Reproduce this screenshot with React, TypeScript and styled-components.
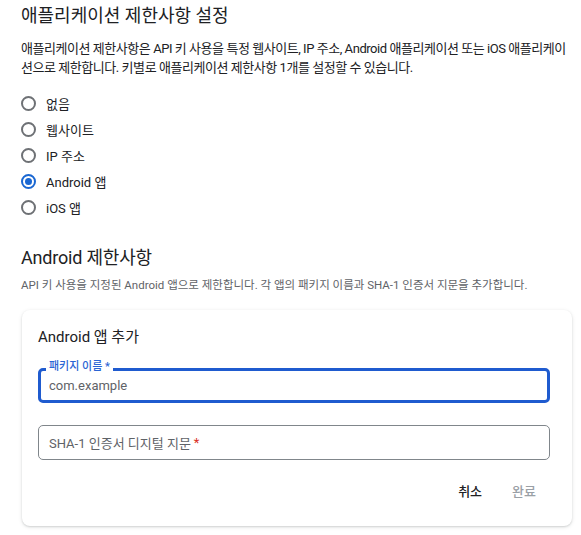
import React, { useState } from 'react';
import styled, { createGlobalStyle } from 'styled-components';

const GlobalStyle = createGlobalStyle`
  body {
    margin: 0;
    background: #fff;
    font-family: Roboto, "Noto Sans CJK KR", "Noto Sans", sans-serif;
    color: #202124;
  }
`;

const Page = styled.div`
  width: 551px;
  padding: 4px 9px 9px 21px;
`;

const Title = styled.h2`
  margin: 0;
  font-size: 18px;
  font-weight: 400;
  line-height: 24px;
  color: #202124;
`;

const Description = styled.p<{ $small?: boolean }>`
  margin: ${(p) => (p.$small ? '6px 0 0' : '11px 0 0')};
  font-size: ${(p) => (p.$small ? '11.5px' : '13px')};
  line-height: ${(p) => (p.$small ? '18px' : '19px')};
  letter-spacing: ${(p) => (p.$small ? '0' : '-0.45px')};
  color: ${(p) => (p.$small ? '#5f6368' : '#202124')};
`;

const RadioList = styled.div`
  display: flex;
  flex-direction: column;
  margin-top: 13px;
`;

const RadioRow = styled.label`
  display: flex;
  align-items: center;
  gap: 10px;
  height: 26px;
  font-size: 13px;
  cursor: pointer;
`;

const RadioCircle = styled.span<{ $checked: boolean }>`
  width: 15px;
  height: 15px;
  box-sizing: border-box;
  border-radius: 50%;
  border: 2px solid ${(p) => (p.$checked ? '#1a67d2' : '#6e7175')};
  display: flex;
  align-items: center;
  justify-content: center;

  &::after {
    content: '';
    width: 7px;
    height: 7px;
    border-radius: 50%;
    background: #1a67d2;
    display: ${(p) => (p.$checked ? 'block' : 'none')};
  }
`;

const SectionTitle = styled(Title)`
  margin-top: 26px;
  letter-spacing: -0.2px;
`;

const Card = styled.div`
  margin-top: 16px;
  margin-left: 1px;
  border-radius: 8px;
  background: #fff;
  box-shadow: 0 1px 2px rgba(60, 64, 67, 0.18), 0 1px 4px rgba(60, 64, 67, 0.1);
  padding: 16px 22px 24px 16px;
`;

const CardTitle = styled.div`
  font-size: 15px;
  line-height: 22px;
  margin-bottom: 20px;
`;

const Field = styled.div<{ $focused?: boolean }>`
  position: relative;
  height: 35px;
  box-sizing: border-box;
  border-radius: 5px;
  border: ${(p) => (p.$focused ? '3px solid #1f5bcf' : '1px solid #80868b')};
  display: flex;
  align-items: center;
  padding-left: ${(p) => (p.$focused ? '8px' : '10px')};
  font-size: 13px;
  color: #5f6368;
  margin-bottom: 22px;
`;

const FloatLabel = styled.span`
  position: absolute;
  top: -11px;
  left: 5px;
  padding: 0 3px;
  background: #fff;
  font-size: 11px;
  line-height: 14px;
  font-weight: 500;
  color: #2a64d4;
`;

const Required = styled.span`
  color: #d93025;
  margin-left: 3px;
`;

const Actions = styled.div`
  display: flex;
  justify-content: flex-end;
  gap: 30px;
  padding: 0 14px 0 0;
  margin-top: 1px;
`;

const TextButton = styled.button<{ $disabled?: boolean }>`
  border: none;
  background: none;
  padding: 0;
  font-family: inherit;
  font-size: 13px;
  line-height: 20px;
  font-weight: 500;
  color: ${(p) => (p.$disabled ? '#9aa0a6' : '#202124')};
  cursor: ${(p) => (p.$disabled ? 'default' : 'pointer')};
`;

const options = ['없음', '웹사이트', 'IP 주소', 'Android 앱', 'iOS 앱'];

const App: React.FC = () => {
  const [selected, setSelected] = useState('Android 앱');

  return (
    <>
      <GlobalStyle />
      <Page>
        <Title>애플리케이션 제한사항 설정</Title>
        <Description>
          애플리케이션 제한사항은 API 키 사용을 특정 웹사이트, IP 주소, Android 애플리케이션 또는 iOS
          애플리케이션으로 제한합니다. 키별로 애플리케이션 제한사항 1개를 설정할 수 있습니다.
        </Description>
        <RadioList>
          {options.map((opt) => (
            <RadioRow key={opt} onClick={() => setSelected(opt)}>
              <RadioCircle $checked={selected === opt} />
              {opt}
            </RadioRow>
          ))}
        </RadioList>

        <SectionTitle>Android 제한사항</SectionTitle>
        <Description $small>
          API 키 사용을 지정된 Android 앱으로 제한합니다. 각 앱의 패키지 이름과 SHA-1 인증서 지문을 추가합니다.
        </Description>

        <Card>
          <CardTitle>Android 앱 추가</CardTitle>
          <Field $focused>
            <FloatLabel>패키지 이름 *</FloatLabel>
            com.example
          </Field>
          <Field>
            SHA-1 인증서 디지털 지문<Required>*</Required>
          </Field>
          <Actions>
            <TextButton>취소</TextButton>
            <TextButton $disabled>완료</TextButton>
          </Actions>
        </Card>
      </Page>
    </>
  );
};

export default App;
